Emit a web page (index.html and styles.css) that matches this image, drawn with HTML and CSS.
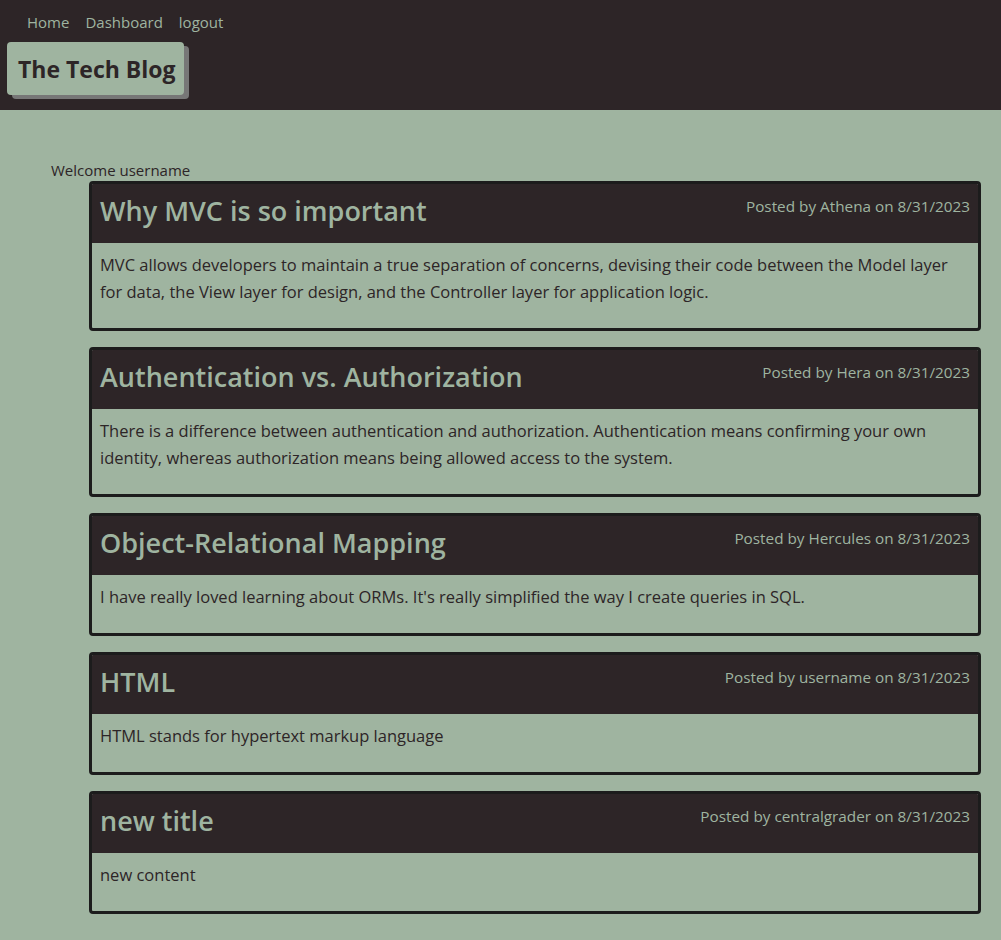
FILE: index.html
```html
<!DOCTYPE html>
<html lang="en">
<head>
<meta charset="utf-8">
<title>The Tech Blog</title>
<link rel="stylesheet" href="styles.css">
</head>
<body>
<header class="site-header">
  <nav class="nav">
    <a href="#">Home</a>
    <a href="#">Dashboard</a>
    <a href="#">logout</a>
  </nav>
  <h1 class="brand">The Tech Blog</h1>
</header>
<main class="main">
  <p class="welcome">Welcome username</p>
  <section class="posts">
    <article class="post">
      <div class="post-head">
        <h2 class="post-title">Why MVC is so important</h2>
        <span class="post-meta">Posted by Athena on 8/31/2023</span>
      </div>
      <div class="post-body">MVC allows developers to maintain a true separation of concerns, devising their code between the Model layer for data, the View layer for design, and the Controller layer for application logic.</div>
    </article>
    <article class="post">
      <div class="post-head">
        <h2 class="post-title">Authentication vs. Authorization</h2>
        <span class="post-meta">Posted by Hera on 8/31/2023</span>
      </div>
      <div class="post-body">There is a difference between authentication and authorization. Authentication means confirming your own identity, whereas authorization means being allowed access to the system.</div>
    </article>
    <article class="post">
      <div class="post-head">
        <h2 class="post-title">Object-Relational Mapping</h2>
        <span class="post-meta">Posted by Hercules on 8/31/2023</span>
      </div>
      <div class="post-body">I have really loved learning about ORMs. It's really simplified the way I create queries in SQL.</div>
    </article>
    <article class="post">
      <div class="post-head">
        <h2 class="post-title">HTML</h2>
        <span class="post-meta">Posted by username on 8/31/2023</span>
      </div>
      <div class="post-body">HTML stands for hypertext markup language</div>
    </article>
    <article class="post">
      <div class="post-head">
        <h2 class="post-title">new title</h2>
        <span class="post-meta">Posted by centralgrader on 8/31/2023</span>
      </div>
      <div class="post-body">new content</div>
    </article>
  </section>
</main>
</body>
</html>
```
FILE: styles.css
```css
* { box-sizing: border-box; }
html, body {
  margin: 0;
  padding: 0;
}
body {
  background: #9fb4a0;
  font-family: "Open Sans", "Noto Sans", sans-serif;
  color: #2d2527;
  min-height: 940px;
}
.site-header {
  background: #2d2527;
  height: 110px;
  padding: 12px 0 0 7px;
}
.nav {
  display: flex;
  gap: 16px;
  padding-left: 20px;
  height: 30px;
}
.nav a {
  color: #9fb4a0;
  text-decoration: none;
  font-size: 15px;
  line-height: 20px;
}
.brand {
  display: inline-block;
  margin: 0;
  background: #9fb4a0;
  color: #2d2527;
  font-size: 23px;
  font-weight: 700;
  line-height: 54px;
  height: 53px;
  width: 177px;
  padding: 0 0 0 11px;
  border-radius: 4px;
  box-shadow: 5px 4px 0 #777;
}
.main {
  padding: 50px 20px 20px 51px;
}
.welcome {
  margin: 0;
  font-size: 15px;
  line-height: 20px;
}
.posts {
  margin: 1px 0 0 38px;
  display: flex;
  flex-direction: column;
  gap: 16px;
}
.post {
  border: 3px solid #1c1c1c;
  border-radius: 4px;
  overflow: hidden;
}
.post-head {
  background: #2d2527;
  color: #9fb4a0;
  display: flex;
  justify-content: space-between;
  align-items: flex-start;
  height: 59px;
  padding: 0 8px 0 8px;
}
.post-title {
  margin: 0;
  font-size: 27px;
  font-weight: 600;
  line-height: 54px;
}
.post-meta {
  font-size: 15.3px;
  line-height: 20px;
  padding-top: 12px;
}
.post-body {
  font-size: 16.5px;
  line-height: 27px;
  padding: 8px 8px 23px;
}
```
